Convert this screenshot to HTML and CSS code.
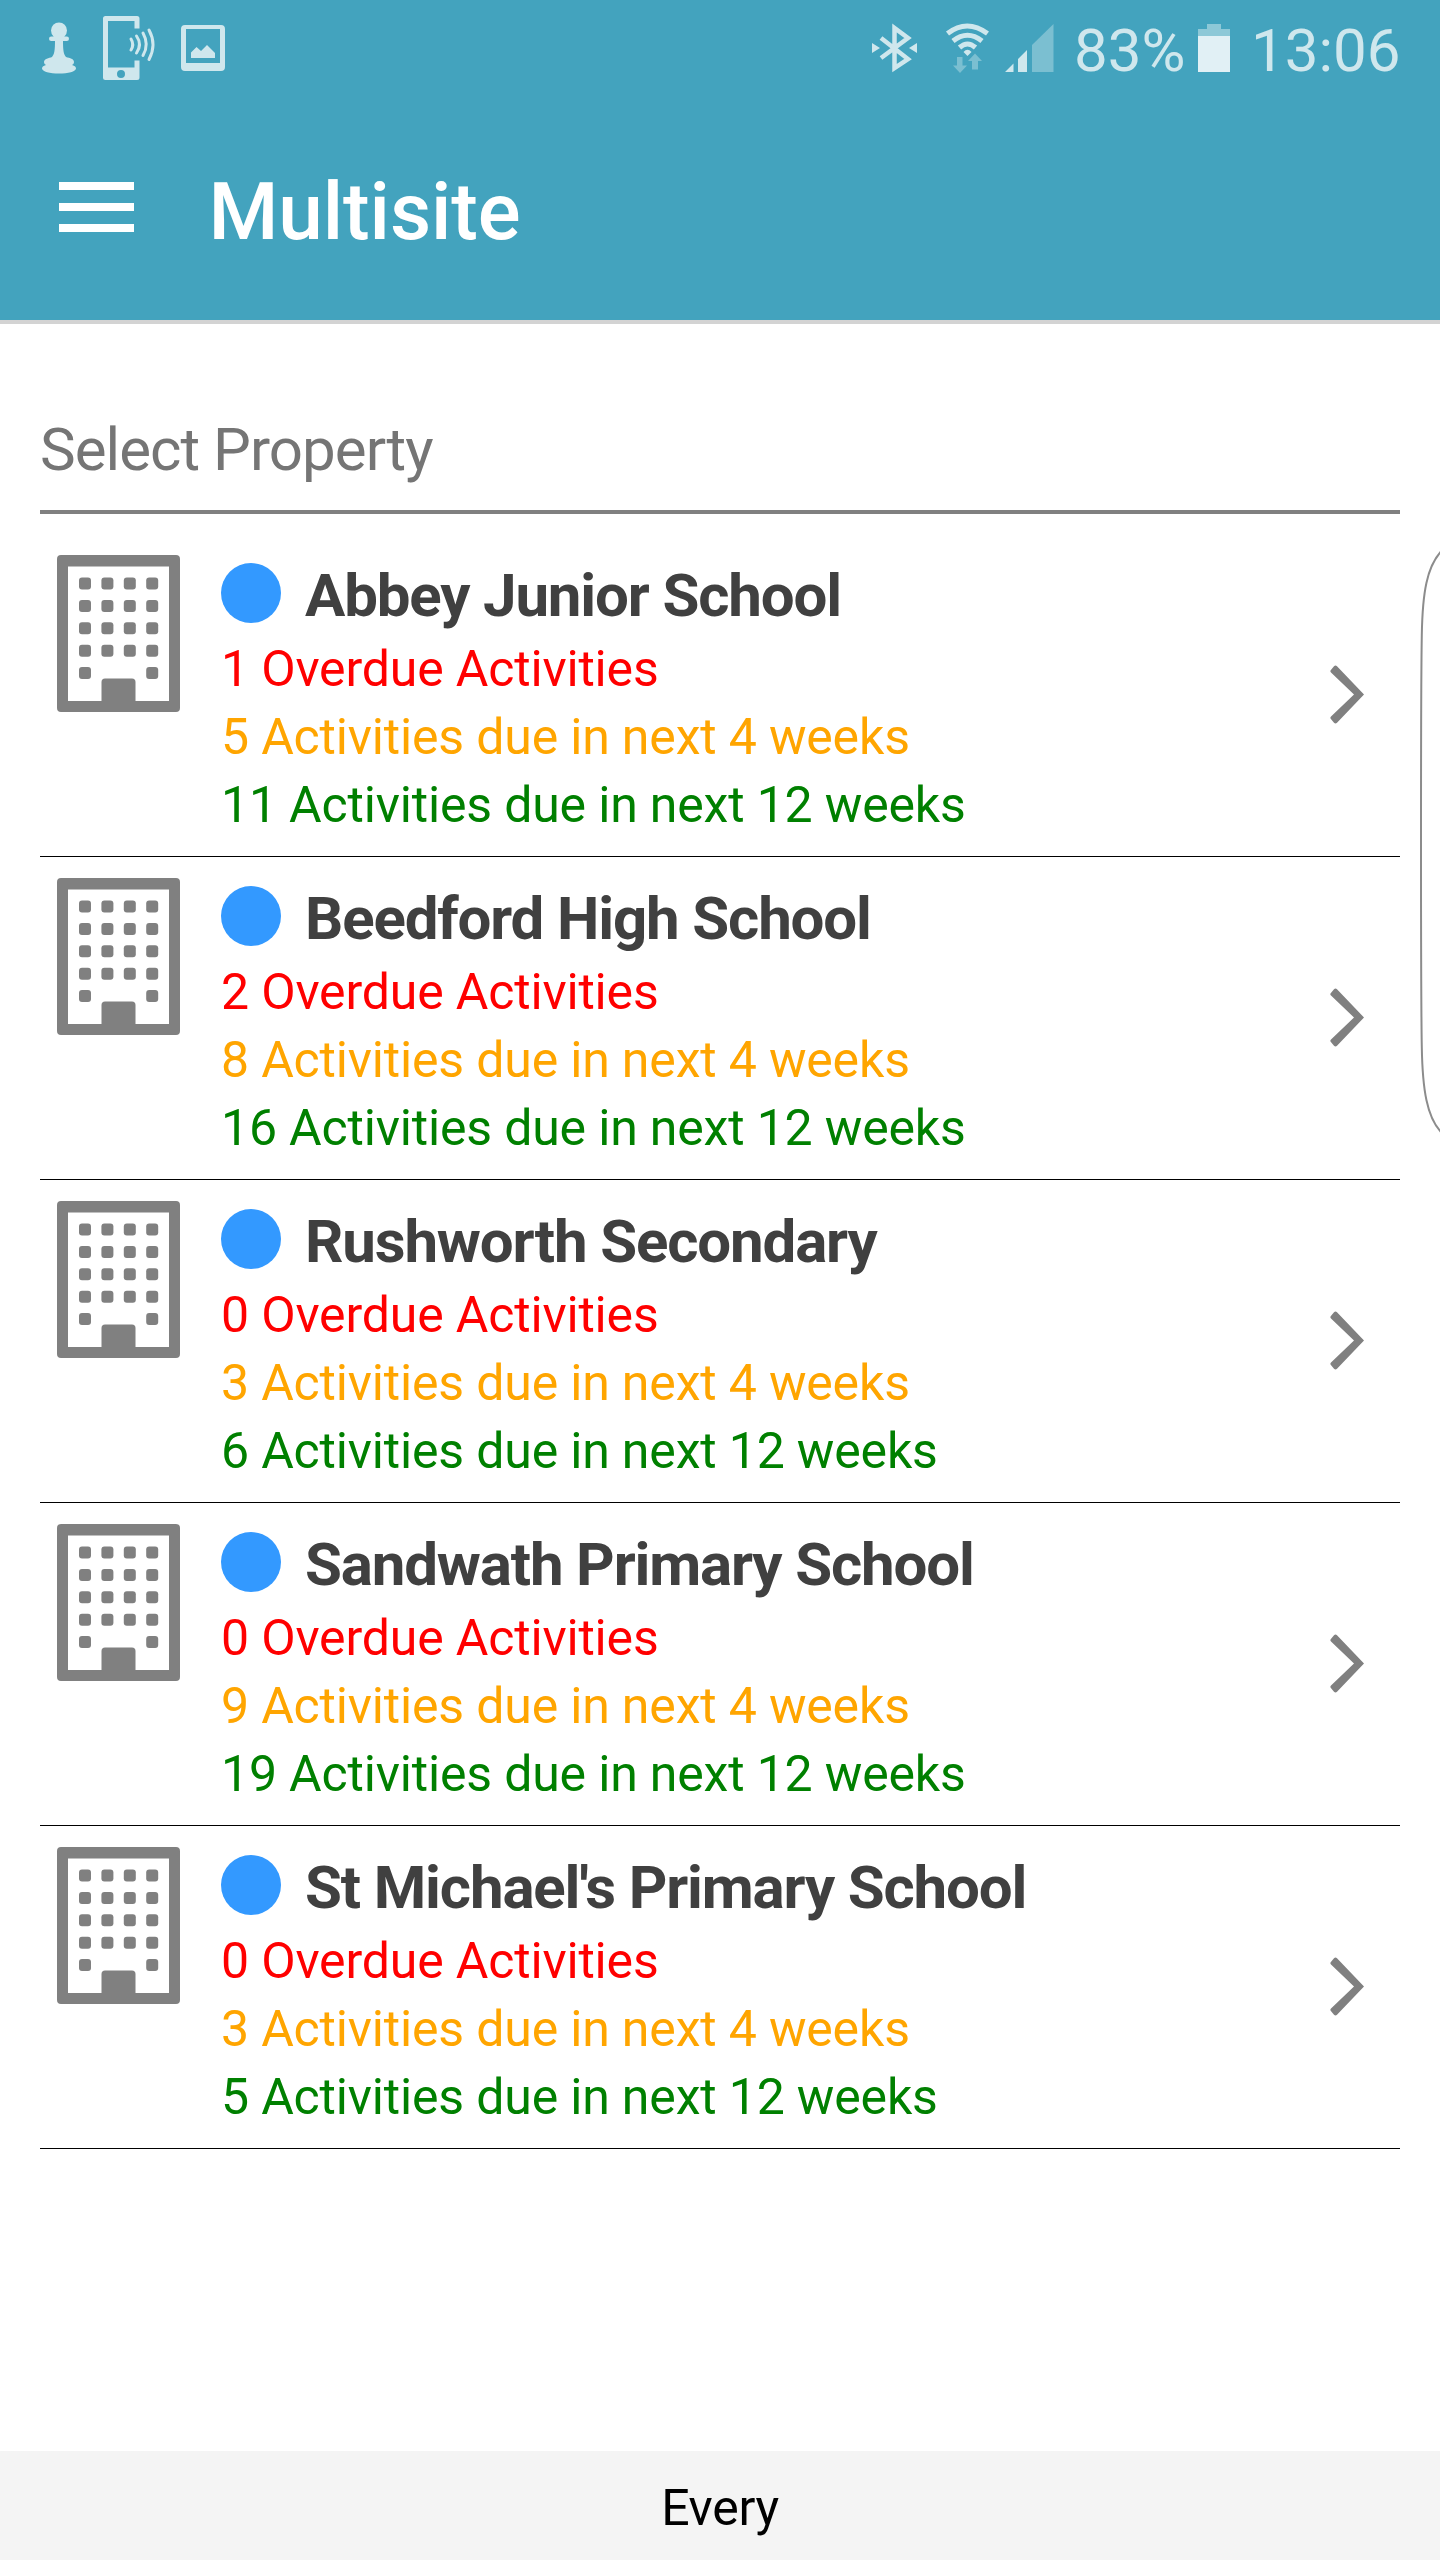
FILE: index.html
```
<!DOCTYPE html>
<html lang="en">
<head>
	<meta charset="utf-8">
	<title>Multisite</title>
	<meta name="viewport" content="width=device-width, initial-scale=1">
	<link rel="stylesheet" href="styles.css">
</head>

<body>

<!-- shapes used by every row -->
<svg class="defs" width="0" height="0">
	<symbol id="building" viewBox="0 0 123 157">
		<path fill-rule="evenodd" d="M4 0H119Q123 0 123 4V153Q123 157 119 157H4Q0 157 0 153V4Q0 0 4 0ZM11 11.500V146H44.500V127Q44.500 123.500 48 123.500H75Q78.500 123.500 78.500 127V146H112V11.500Z"/>
		<g id="windows">
			<rect x="22" y="22.500" width="12" height="12" rx="3"/><rect x="44.400" y="22.500" width="12" height="12" rx="3"/><rect x="66.800" y="22.500" width="12" height="12" rx="3"/><rect x="89.200" y="22.500" width="12" height="12" rx="3"/>
		</g>
		<use href="#windows" y="22.400"/>
		<use href="#windows" y="44.800"/>
		<use href="#windows" y="67.200"/>
		<rect x="22" y="112.100" width="12" height="12" rx="3"/><rect x="89.200" y="112.100" width="12" height="12" rx="3"/>
	</symbol>
	<symbol id="chevron" viewBox="0 0 34 59">
		<path d="M0.500 5.500L4 1.200Q5.500 0 7 1.200L34 29.500L7 57.800Q5.500 59 4 57.800L0.500 53.500Q0 52.500 1 51.500L24 29.500L1 7.500Q0 6.500 0.500 5.500Z"/>
	</symbol>
</svg>

<header class="header">
	<!-- phone status bar -->
	<div class="status">
		<svg class="status-left" width="280" height="100" viewBox="0 0 280 100">
			<circle cx="59" cy="30.500" r="8"/>
			<rect x="49" y="36.500" width="20" height="4.500" rx="2.200"/>
			<path d="M55 40H63C63 50 63.500 54 66 57C70 58 74 59 74 62C74 63.500 73 64.500 72 65C75 66 76 67 76 68.500C76 71.500 68 73.500 59 73.500S42 71.500 42 68.500C42 67 43 66 46 65C45 64.500 44 63.500 44 62C44 59 49 58 52 57C54.500 54 55 50 55 40Z"/>
			<path fill-rule="evenodd" d="M105.500 16H137Q139.500 16 139.500 18.500V28.500H134.500V21H108V67.500H134.500V60.500H139.500V77.500Q139.500 80 137 80H105.500Q103 80 103 77.500V18.500Q103 16 105.500 16ZM121 70A4 4 0 1 0 121 78A4 4 0 1 0 121 70Z"/>
			<path class="line" d="M131 39Q134.500 44.500 131 50M136.500 36Q142.500 44.500 136.500 53M143 33Q149.500 44.500 143 55.500M149 30Q157 44.500 149 59.500"/>
			<path fill-rule="evenodd" d="M185 25H221Q225 25 225 29V67Q225 71 221 71H185Q181 71 181 67V29Q181 25 185 25ZM186 29V63H220V29Z"/>
			<path d="M191 58V52.500L196.500 47L201 51L207 45L215 53V58Z"/>
		</svg>
		<svg class="status-right" width="220" height="100" viewBox="860 0 220 100">
			<path class="bt" d="M881 38L908 59L894.500 68V28L908 38L881 58"/>
			<path d="M872 43L880 48L872 53ZM917 43L909 48L917 53Z"/>
			<path class="wifi" d="M947.500 33.500Q967 18.500 987.500 33.500M953 41Q967.500 29.500 982 41M959.500 47.500Q967.500 40.500 975.500 47.500"/>
			<path d="M963.500 52Q967.500 47.500 971.500 52L967.500 56Z"/>
			<g class="dim">
				<path d="M957 57H962.500V65.500H967L960 73L953 65.500H957ZM972 69.500V61H968L975 53.500L982 61H978V69.500Z"/>
				<path d="M1032 45L1053.500 24V72H1032Z"/>
			</g>
			<path d="M1005 72L1013.500 63.500V72ZM1018 72V59L1027 50V72Z"/>
		</svg>
		<span class="percent">83%</span>
		<svg class="battery" width="32" height="48" viewBox="0 0 32 48">
			<path class="empty" d="M9 0H23V5H32V12H0V5H9Z"/>
			<rect class="full" y="12" width="32" height="36"/>
		</svg>
		<span class="clock">13:06</span>
	</div>

	<div class="toolbar">
		<div class="menu"><i></i><i></i><i></i></div>
		<h1>Multisite</h1>
	</div>
</header>

<!-- Page content -->
<div class="main">
	<h2>Select Property</h2>

	<div class="property">
		<svg class="building"><use href="#building"/></svg>
		<div class="info">
			<div class="name"><span class="dot"></span><b>Abbey Junior School</b></div>
			<p class="overdue">1 Overdue Activities</p>
			<p class="soon">5 Activities due in next 4 weeks</p>
			<p class="later">11 Activities due in next 12 weeks</p>
		</div>
		<svg class="chevron"><use href="#chevron"/></svg>
	</div>

	<div class="property">
		<svg class="building"><use href="#building"/></svg>
		<div class="info">
			<div class="name"><span class="dot"></span><b>Beedford High School</b></div>
			<p class="overdue">2 Overdue Activities</p>
			<p class="soon">8 Activities due in next 4 weeks</p>
			<p class="later">16 Activities due in next 12 weeks</p>
		</div>
		<svg class="chevron"><use href="#chevron"/></svg>
	</div>

	<div class="property">
		<svg class="building"><use href="#building"/></svg>
		<div class="info">
			<div class="name"><span class="dot"></span><b>Rushworth Secondary</b></div>
			<p class="overdue">0 Overdue Activities</p>
			<p class="soon">3 Activities due in next 4 weeks</p>
			<p class="later">6 Activities due in next 12 weeks</p>
		</div>
		<svg class="chevron"><use href="#chevron"/></svg>
	</div>

	<div class="property">
		<svg class="building"><use href="#building"/></svg>
		<div class="info">
			<div class="name"><span class="dot"></span><b>Sandwath Primary School</b></div>
			<p class="overdue">0 Overdue Activities</p>
			<p class="soon">9 Activities due in next 4 weeks</p>
			<p class="later">19 Activities due in next 12 weeks</p>
		</div>
		<svg class="chevron"><use href="#chevron"/></svg>
	</div>

	<div class="property">
		<svg class="building"><use href="#building"/></svg>
		<div class="info">
			<div class="name"><span class="dot"></span><b>St Michael's Primary School</b></div>
			<p class="overdue">0 Overdue Activities</p>
			<p class="soon">3 Activities due in next 4 weeks</p>
			<p class="later">5 Activities due in next 12 weeks</p>
		</div>
		<svg class="chevron"><use href="#chevron"/></svg>
	</div>
</div>

<footer class="footer">Every</footer>

<!-- edge panel handle, lies over the list -->
<svg class="edge" width="22" height="584" viewBox="0 0 22 584">
	<path d="M23 1.500C9 17 4.500 42 3.800 85Q3 130 3 291Q3 452 3.800 497C4.500 540 9 567 23 582"/>
</svg>

</body>
</html>
```

FILE: styles.css
```
* {
  box-sizing: border-box;
}

body {
  margin: 0;
  height: 2560px;
  position: relative;
  display: flex;
  flex-direction: column;
  background-color: #fff;
  font-family: Roboto, sans-serif;
  overflow: hidden;
}

h1, h2, p {
  margin: 0;
}

.defs {
  position: absolute;
}

.header {
  height: 324px;
  background-color: #43a3be;
  border-bottom: 4px solid #d3d3d3;
}

/* status bar */
.status {
  height: 100px;
  display: flex;
  fill: #cfe7ed;
  color: #cfe7ed;
  font-size: 60px;
  line-height: 101px;
}

.status-right {
  margin-left: 580px;
}

.line, .bt, .wifi {
  fill: none;
  stroke: #cfe7ed;
  stroke-width: 3;
  stroke-linecap: round;
}

.bt {
  stroke-width: 4.5;
  stroke-linecap: butt;
}

.wifi {
  stroke-width: 5;
  stroke-linecap: butt;
}

.dim {
  fill: #7bbfd1;
}

.percent {
  width: 118px;
  margin-left: -6px;
}

.battery {
  margin: 24px 0 0 6px;
}

.empty {
  fill: #8dc8d7;
}

.full {
  fill: #e1f0f5;
}

.clock {
  margin-left: 21px;
}

.toolbar {
  display: flex;
  padding: 82px 0 0 58.5px;
}

.menu {
  width: 75px;
  display: flex;
  flex-direction: column;
  gap: 13px;
}

.menu i {
  height: 8px;
  background-color: #fff;
}

h1 {
  margin: -18px 0 0 75px;
  color: #fff;
  font-size: 80px;
  font-weight: 500;
  line-height: 96px;
  letter-spacing: -0.1px;
}

/* property list */
.main {
  flex: 1;
  padding: 90px 40px 0;
}

h2 {
  height: 100px;
  margin-bottom: 20px;
  border-bottom: 4px solid #808080;
  color: #757575;
  font-size: 60px;
  font-weight: 400;
  line-height: 71px;
  letter-spacing: -0.95px;
}

.property {
  height: 323px;
  display: flex;
  padding: 21px 36px 0 17px;
  border-bottom: 1px solid #000;
}

.building {
  width: 123px;
  height: 157px;
  fill: #808080;
}

.info {
  flex: 1;
  margin: 2px 0 0 41px;
  font-size: 50px;
  line-height: 68px;
  letter-spacing: -0.17px;
}

.name {
  height: 78px;
  display: flex;
  color: #404040;
  font-size: 60px;
  line-height: 77px;
  letter-spacing: -1.15px;
}

.dot {
  width: 60px;
  height: 60px;
  margin: 6px 24px 0 0;
  border-radius: 50%;
  background-color: #3399ff;
}

.overdue {
  color: #f00;
}

.soon {
  color: #ffa500;
}

.later {
  color: #008000;
}

.chevron {
  width: 34px;
  height: 59px;
  margin-top: 110px;
  fill: #808080;
}

.footer {
  height: 109px;
  background-color: #f4f4f4;
  color: #000;
  font-size: 50px;
  line-height: 115px;
  letter-spacing: -0.3px;
  text-align: center;
}

.edge {
  position: absolute;
  top: 550px;
  right: 0;
  fill: none;
  stroke: #8c8c8c;
  stroke-width: 2;
}
```
